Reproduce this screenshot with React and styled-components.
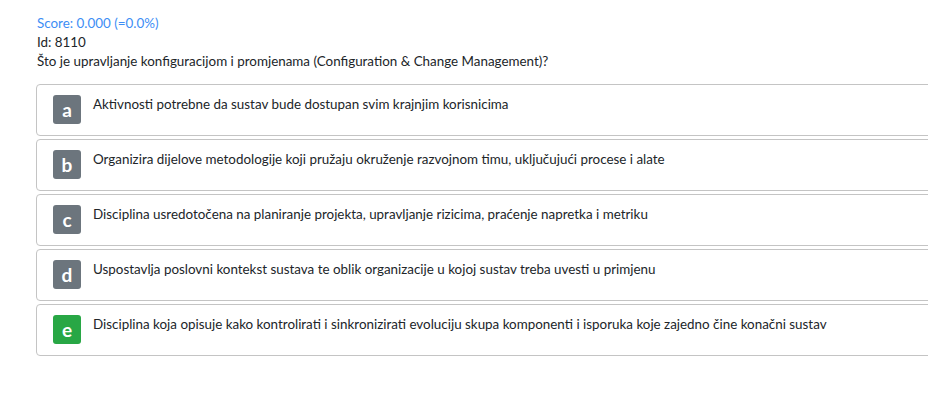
import styled, { createGlobalStyle } from "styled-components";

const GlobalStyle = createGlobalStyle`
  html, body {
    margin: 0;
    padding: 0;
    background: #fff;
    overflow: hidden;
  }
  body {
    font-family: Lato, "Open Sans", sans-serif;
    color: #212529;
  }
`;

const Page = styled.div`
  padding: 14px 0 0 37px;
  width: 960px;
`;

const Score = styled.div`
  font-size: 13.4px;
  line-height: 19px;
  color: #3d8ef5;
`;

const Meta = styled.div`
  font-size: 13.4px;
  line-height: 19px;
`;

const Question = styled.div`
  font-size: 13.4px;
  line-height: 19px;
  margin-bottom: 13px;
`;

const Options = styled.div`
  display: flex;
  flex-direction: column;
  gap: 3px;
  margin-left: -1px;
`;

const Option = styled.div`
  display: flex;
  align-items: flex-start;
  gap: 12px;
  height: 52px;
  box-sizing: border-box;
  padding: 10px 16px 0;
  border: 1px solid #c4c4c4;
  border-radius: 4px;
`;

const Badge = styled.div`
  display: flex;
  align-items: center;
  justify-content: center;
  width: 28px;
  height: 29px;
  flex-shrink: 0;
  border-radius: 3px;
  background: ${(p) => (p.$correct ? "#28a745" : "#6c757d")};
  color: #fff;
  font-size: 19px;
  font-weight: 700;
`;

const Text = styled.div`
  font-size: 13.4px;
  line-height: 19px;
`;

const options = [
  { key: "a", text: "Aktivnosti potrebne da sustav bude dostupan svim krajnjim korisnicima" },
  { key: "b", text: "Organizira dijelove metodologije koji pružaju okruženje razvojnom timu, uključujući procese i alate" },
  { key: "c", text: "Disciplina usredotočena na planiranje projekta, upravljanje rizicima, praćenje napretka i metriku" },
  { key: "d", text: "Uspostavlja poslovni kontekst sustava te oblik organizacije u kojoj sustav treba uvesti u primjenu" },
  { key: "e", text: "Disciplina koja opisuje kako kontrolirati i sinkronizirati evoluciju skupa komponenti i isporuka koje zajedno čine konačni sustav", correct: true },
];

export default function App() {
  return (
    <>
      <GlobalStyle />
      <Page>
        <Score>Score: 0.000 (=0.0%)</Score>
        <Meta>Id: 8110</Meta>
        <Question>Što je upravljanje konfiguracijom i promjenama (Configuration &amp; Change Management)?</Question>
        <Options>
          {options.map((o) => (
            <Option key={o.key}>
              <Badge $correct={o.correct}>{o.key}</Badge>
              <Text>{o.text}</Text>
            </Option>
          ))}
        </Options>
      </Page>
    </>
  );
}
